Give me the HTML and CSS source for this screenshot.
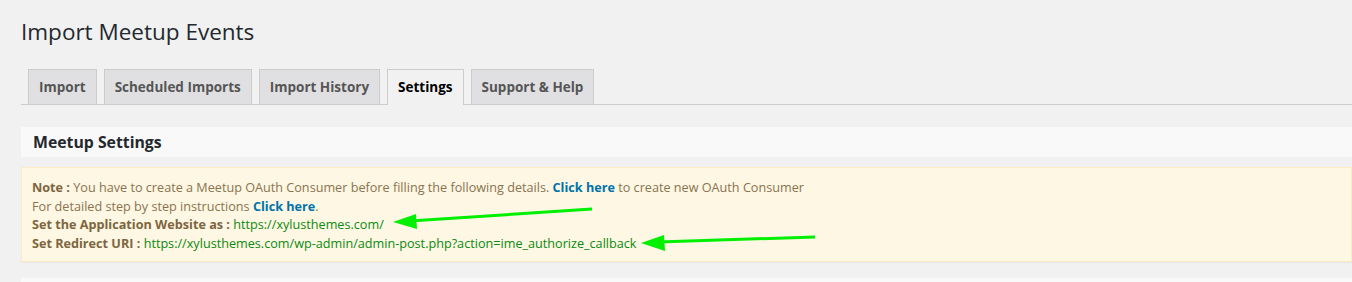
FILE: index.html
```html
<!DOCTYPE html>
<html lang="en">
<head>
    <meta charset="UTF-8">
    <title>Import Meetup Events</title>
    <link rel="stylesheet" href="styles.css">
</head>
<body>

    <div class="wrap">
        <h1>Import Meetup Events</h1>

        <!-- Tabs -->
        <nav class="tabs">
            <a class="tab" href="#">Import</a>
            <a class="tab" href="#">Scheduled Imports</a>
            <a class="tab" href="#">Import History</a>
            <a class="tab active" href="#">Settings</a>
            <a class="tab" href="#">Support &amp; Help</a>
        </nav>

        <!-- Settings box -->
        <div class="box-head">
            <h2>Meetup Settings</h2>
        </div>

        <div class="notice">
            <p><strong>Note :</strong> You have to create a Meetup OAuth Consumer before filling the following details. <a href="#">Click here</a> to create new OAuth Consumer</p>
            <p>For detailed step by step instructions <a href="#">Click here</a>.</p>
            <p><strong>Set the Application Website as :</strong> <span class="url">https://xylusthemes.com/</span></p>
            <p><strong>Set Redirect URI :</strong> <span class="url">https://xylusthemes.com/wp-admin/admin-post.php?action=ime_authorize_callback</span></p>
        </div>

        <div class="box-next"></div>
    </div>

    <!-- annotation arrows -->
    <svg class="arrows" width="1352" height="282" viewBox="0 0 1352 282">
        <line x1="592" y1="209" x2="410" y2="221" stroke="#00f000" stroke-width="3" />
        <polygon points="393,222 416,214 417,229" fill="#00f000" />
        <line x1="815" y1="237" x2="658" y2="242" stroke="#00f000" stroke-width="3" />
        <polygon points="641,243 664,235 665,251" fill="#00f000" />
    </svg>

</body>
</html>
```

FILE: styles.css
```css
body {
    margin: 0;
    background: #f1f1f1;
    font-family: "Open Sans", Arial, sans-serif;
    color: #444;
    position: relative;
    overflow: hidden;
}

.wrap {
    margin-left: 21px;
}

h1 {
    font-size: 22.5px;
    font-weight: 400;
    color: #23282d;
    margin: 0;
    padding: 17px 0 0;
    line-height: 29px;
}

.tabs {
    display: flex;
    margin-top: 23px;
    padding-left: 7px;
    border-bottom: 1px solid #ccc;
}

.tab {
    display: block;
    margin-right: 7px;
    padding: 5px 10px;
    line-height: 24px;
    font-size: 13.5px;
    font-weight: 700;
    color: #555;
    text-decoration: none;
    background: #e0e0e2;
    border: 1px solid #ccc;
    border-bottom: none;
}

.tab.active {
    background: #f1f1f1;
    color: #000;
    margin-bottom: -1px;
    padding-bottom: 6px;
}

.box-head {
    margin-top: 22px;
    background: #f9f9f9;
    height: 30px;
    padding-left: 12px;
}

.box-head h2 {
    margin: 0;
    font-size: 15.8px;
    line-height: 30px;
    font-weight: 700;
    color: #23282d;
}

.notice {
    margin-top: 10px;
    background: #fef7e3;
    border: 1px solid #fcecc3;
    box-shadow: 0 1px 1px rgba(0, 0, 0, 0.04);
    padding: 10px 10px 9px;
    font-size: 12.65px;
    line-height: 18.5px;
    color: #8a7350;
}

.notice p {
    margin: 0;
}

.notice strong {
    color: #7d6540;
}

.notice a {
    color: #0073aa;
    font-weight: 700;
    text-decoration: none;
}

.notice .url {
    color: #0a8a10;
}

.box-next {
    margin-top: 16px;
    height: 20px;
    background: #f9f9f9;
}

.arrows {
    position: absolute;
    left: 0;
    top: 0;
    pointer-events: none;
}
```
